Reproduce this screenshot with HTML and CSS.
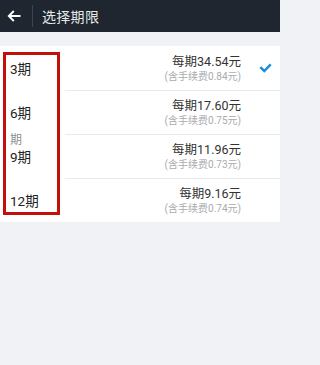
FILE: index.html
```html
<!DOCTYPE html>
<html lang="zh">
<head>
<meta charset="utf-8">
<link rel="stylesheet" href="styles.css">
</head>
<body>
<div class="page">
  <header class="bar">
    <svg class="back" width="14" height="12" viewBox="0 0 14 12"><path d="M13.5 6H2M6.8 1L1.8 6l5 5" fill="none" stroke="#fff" stroke-width="1.9"/></svg>
    <span class="divider"></span>
    <span class="title">选择期限</span>
  </header>
  <div class="band"></div>
  <ul class="list">
    <li class="row">
      <span class="label">3期</span>
      <div class="amount"><span class="main">每期34.54元</span><span class="sub">(含手续费0.84元)</span></div>
      <span class="check"><svg width="13" height="10" viewBox="0 0 13 10"><path d="M1.3 4.2l4 3.8 6.4-6.6" fill="none" stroke="#1a8fd8" stroke-width="2.5"/></svg></span>
    </li>
    <li class="row">
      <span class="label">6期</span>
      <div class="amount"><span class="main">每期17.60元</span><span class="sub">(含手续费0.75元)</span></div>
      <span class="check"></span>
    </li>
    <li class="row">
      <span class="label"><span class="ghost">期</span>9期</span>
      <div class="amount"><span class="main">每期11.96元</span><span class="sub">(含手续费0.73元)</span></div>
      <span class="check"></span>
    </li>
    <li class="row">
      <span class="label">12期</span>
      <div class="amount"><span class="main">每期9.16元</span><span class="sub">(含手续费0.74元)</span></div>
      <span class="check"></span>
    </li>
  </ul>
  <div class="highlight"></div>
</div>
</body>
</html>
```
FILE: styles.css
```css
html, body {
  margin: 0;
  padding: 0;
  background: #f1f2f5;
  font-family: Roboto, "Noto Sans CJK SC", sans-serif;
}
.page {
  position: relative;
  width: 280px;
  height: 365px;
  overflow: hidden;
}
.bar {
  height: 32px;
  background: #1f2630;
  display: flex;
  align-items: center;
}
.back {
  margin-left: 7px;
  width: 14px;
  height: 12px;
}
.divider {
  width: 1px;
  height: 22px;
  background: #3b4450;
  margin-left: 11px;
}
.title {
  margin-left: 9px;
  color: #e6e8ea;
  font-size: 14px;
  letter-spacing: 0.3px;
}
.band {
  height: 14px;
  background: #f1f2f5;
}
.list {
  list-style: none;
  margin: 0;
  padding: 0;
  background: #fff;
}
.row {
  height: 44px;
  display: flex;
  align-items: center;
  position: relative;
}
.row + .row::before {
  content: "";
  position: absolute;
  left: 65px;
  right: 0;
  top: 0;
  height: 1px;
  background: #e9eaec;
}
.label {
  position: relative;
  margin-left: 10px;
  width: 60px;
  font-size: 13.5px;
  color: #222;
}
.ghost {
  position: absolute;
  left: 0;
  bottom: 100%;
  font-size: 12px;
  line-height: 12px;
  color: #444;
  opacity: 0.6;
}
.amount {
  flex: 1;
  display: flex;
  flex-direction: column;
  align-items: flex-end;
  margin-top: 1px;
}
.main {
  font-size: 12.5px;
  color: #333;
  line-height: 17px;
}
.sub {
  font-size: 10px;
  color: #a9abae;
  line-height: 14px;
}
.check {
  width: 39px;
  display: flex;
  justify-content: center;
  padding-left: 10px;
  box-sizing: border-box;
}
.highlight {
  position: absolute;
  left: 3px;
  top: 52px;
  width: 51px;
  height: 157px;
  border: 3.5px solid #c40f0f;
}
```
